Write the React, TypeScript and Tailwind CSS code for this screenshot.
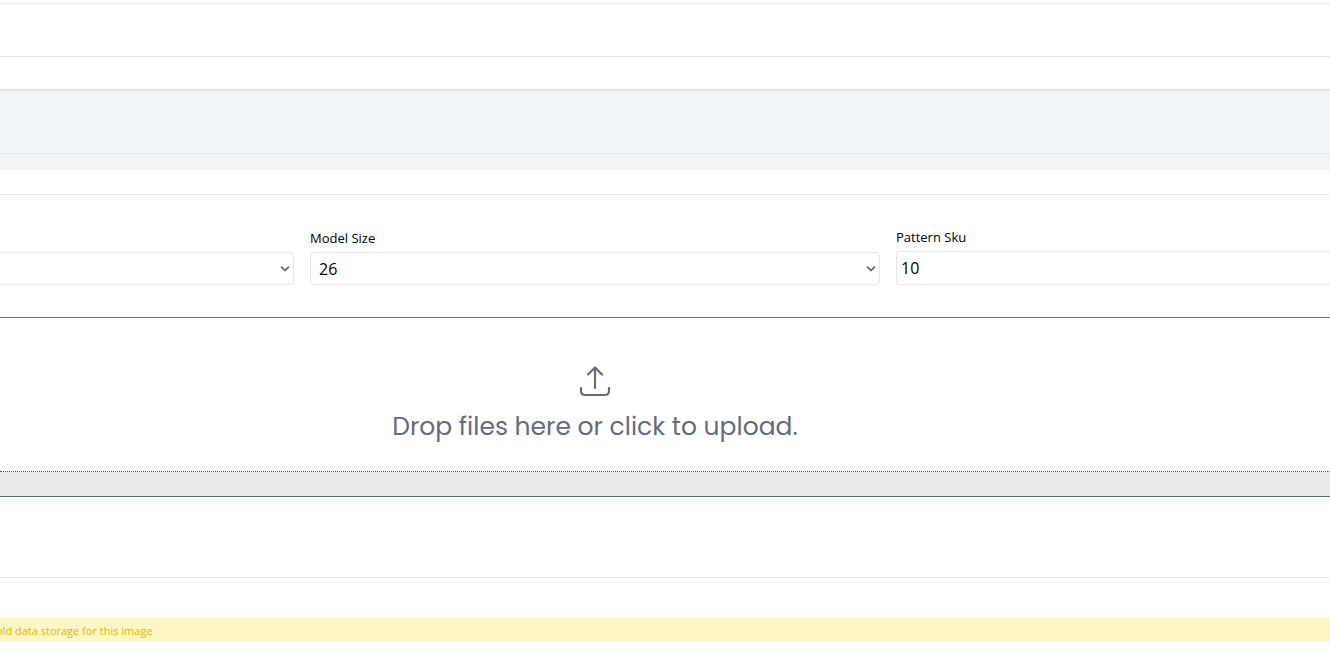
import { useState } from 'react';
import type { ReactNode } from 'react';

interface SelectBoxProps {
  id: string;
  className: string;
  options: string[];
  ariaLabel?: string;
}

function SelectBox({ id, className, options, ariaLabel }: SelectBoxProps) {
  const [value, setValue] = useState(options[0]);

  return (
    <div className="relative">
      <select
        id={id}
        aria-label={ariaLabel}
        value={value}
        onChange={(e) => setValue(e.target.value)}
        className={`block h-[33px] w-full appearance-none border-gray-200 bg-white pl-2 pr-6 text-base leading-6 text-black ${className}`}
      >
        {options.map((option) => (
          <option key={option} value={option}>{option}</option>
        ))}
      </select>
      <svg
        viewBox="0 0 10 6"
        className="pointer-events-none absolute right-1 top-[14px] h-[6px] w-[10px] fill-none stroke-[#707070]"
        strokeWidth="1.8"
      >
        <path d="M1 0.6 L5 4.4 L9 0.6" />
      </svg>
    </div>
  );
}

function Field({ id, label, children }: { id: string; label: string; children: ReactNode }) {
  return (
    <div>
      <label htmlFor={id} className="mb-1 block text-[13px] leading-5 text-black">{label}</label>
      {children}
    </div>
  );
}

function UploadIcon() {
  return (
    <svg
      viewBox="0 0 32 32"
      className="h-8 w-8 fill-none stroke-[#646c7f]"
      strokeWidth="2.2"
      strokeLinecap="round"
      strokeLinejoin="round"
    >
      <path d="M16 23 V2.5 M9 9.5 L16 2.5 L23 9.5" />
      <path d="M2 23 V26 Q2 30 6 30 H26 Q30 30 30 26 V23" />
    </svg>
  );
}

export default function App() {
  const [sku, setSku] = useState('10');

  return (
    <div className="overflow-hidden bg-white font-['Segoe_UI','Open_Sans',sans-serif]">
      <header className="relative shadow-[0_1px_2px_rgba(0,0,0,0.05)]">
        <div className="h-1 border-b border-gray-200" />
        <div className="h-[53px] border-b border-gray-200" />
        <div className="h-[33px] border-b border-[#dcdde1]" />
      </header>

      <div className="bg-[#f1f5f8] pb-4">
        <div className="h-16 border-b border-gray-200" />
      </div>

      <main>
        <div className="h-[25px] border-b border-gray-200" />

        <form className="pt-8 pb-8">
          <div className="grid grid-cols-[294fr_570fr_434fr] items-end gap-4">
            <SelectBox id="model" ariaLabel="Model" options={['']} className="rounded-r border-y border-r" />
            <Field id="model-size" label="Model Size">
              <SelectBox id="model-size" options={['26', '28', '30']} className="rounded border" />
            </Field>
            <Field id="pattern-sku" label="Pattern Sku">
              <input
                id="pattern-sku"
                type="text"
                value={sku}
                onChange={(e) => setSku(e.target.value)}
                className="block h-[34px] w-full rounded-l border-y border-l border-gray-200 bg-white px-1 text-base leading-6 text-black"
              />
            </Field>
          </div>
        </form>

        <div className="border-y border-t-[#6b6f7c] border-b-[#5f6b85] bg-[#eaebed] pb-6">
          <button
            type="button"
            className="flex h-[154px] w-full cursor-pointer flex-col items-center justify-center border-b border-dotted border-[#555555] bg-white pt-5 pr-[140px] text-[#646c7f]"
          >
            <UploadIcon />
            <span className="mt-3 font-['Poppins','Inter',sans-serif] text-[25px] leading-9">
              Drop files here or click to upload.
            </span>
          </button>
        </div>

        <div className="h-[81px] border-b border-gray-200" />

        <div className="pt-10 pb-[10px]">
          <p className="flex h-6 items-center bg-[#fef7c3] pt-0.5 text-[11px] font-medium text-[#eab308]">
            <span className="-ml-1 whitespace-nowrap">old data storage for this image</span>
          </p>
        </div>
      </main>
    </div>
  );
}
